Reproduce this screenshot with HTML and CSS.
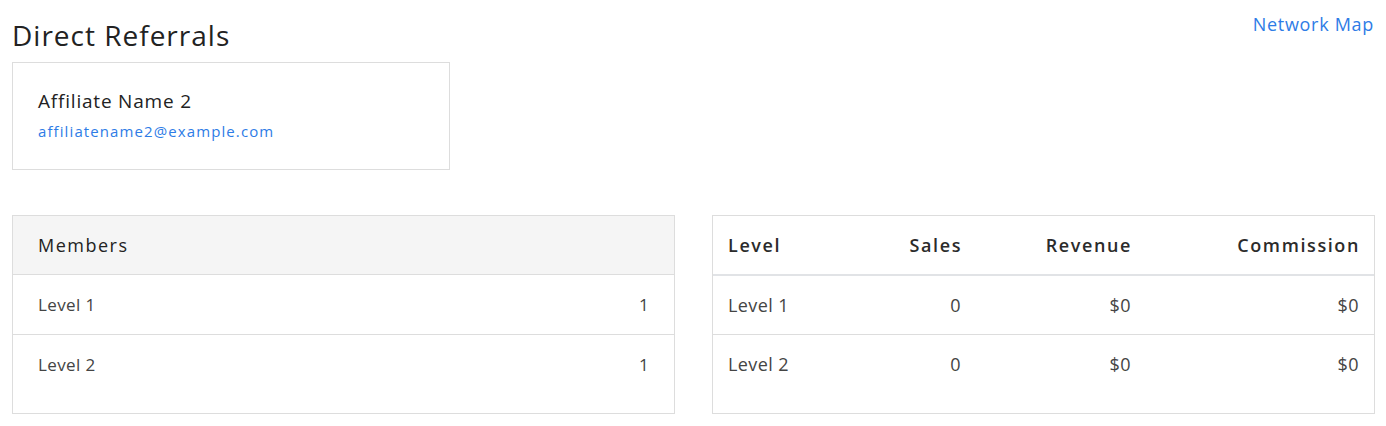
FILE: index.html
```html
<!DOCTYPE html>
<html lang="en">
<head>
<meta charset="utf-8">
<title>Direct Referrals</title>
<link rel="stylesheet" href="styles.css">
</head>
<body>
<div class="page">
  <div class="top">
    <h1 class="title">Direct Referrals</h1>
    <a class="map-link" href="#">Network Map</a>
  </div>
  <div class="affiliate-card">
    <div class="aff-name">Affiliate Name 2</div>
    <a class="aff-email" href="#">affiliatename2@example.com</a>
  </div>
  <div class="panels">
    <div class="panel">
      <div class="panel-head">Members</div>
      <div class="panel-row"><span>Level 1</span><span>1</span></div>
      <div class="panel-row"><span>Level 2</span><span>1</span></div>
    </div>
    <div class="panel">
      <table class="stats">
        <thead>
          <tr><th class="c-level">Level</th><th class="c-sales">Sales</th><th class="c-rev">Revenue</th><th class="c-comm">Commission</th></tr>
        </thead>
        <tbody>
          <tr><td>Level 1</td><td>0</td><td>$0</td><td>$0</td></tr>
          <tr><td>Level 2</td><td>0</td><td>$0</td><td>$0</td></tr>
        </tbody>
      </table>
    </div>
  </div>
</div>
</body>
</html>
```
FILE: styles.css
```css
* { box-sizing: border-box; }
body {
  margin: 0;
  background: #fff;
  font-family: "Open Sans", "DejaVu Sans", sans-serif;
  color: #333;
}
.page {
  padding: 0 12px 0 12px;
}
.top {
  display: flex;
  justify-content: space-between;
  align-items: flex-start;
}
.title {
  margin: 16px 0 0 0;
  font-size: 28px;
  font-weight: 400;
  letter-spacing: 1px;
  color: #222;
  line-height: 38px;
  height: 46px;
}
.map-link {
  margin-top: 12px;
  margin-right: 0;
  font-size: 18px;
  letter-spacing: 0.7px;
  line-height: 24px;
  color: #2e7ce6;
  text-decoration: none;
}
.affiliate-card {
  width: 438px;
  height: 108px;
  border: 1px solid #ddd;
  padding: 25px 25px 0 25px;
}
.aff-name {
  font-size: 19px;
  letter-spacing: 0.8px;
  line-height: 26px;
  color: #222;
}
.aff-email {
  display: block;
  margin-top: 8px;
  font-size: 15px;
  letter-spacing: 1.1px;
  line-height: 18px;
  color: #2e7ce6;
  text-decoration: none;
}
.panels {
  display: grid;
  grid-template-columns: 663px 663px;
  column-gap: 37px;
  margin-top: 45px;
}
.panel {
  border: 1px solid #ddd;
  padding-bottom: 20px;
}
.panel-head {
  background: #f5f5f5;
  height: 59px;
  border-bottom: 1px solid #ddd;
  padding: 0 25px;
  display: flex;
  align-items: center;
  font-size: 18px;
  letter-spacing: 1.5px;
  color: #222;
}
.panel-row {
  height: 59px;
  padding: 0 25px 0 25px;
  display: flex;
  justify-content: space-between;
  align-items: center;
  font-size: 17px;
  letter-spacing: 0.4px;
  color: #444;
}
.panel-row + .panel-row { border-top: 1px solid #ddd; }
.stats {
  width: 100%;
  border-collapse: collapse;
  font-size: 18px;
}
.stats th, .stats td {
  padding: 0 15px;
  height: 59px;
  text-align: right;
  vertical-align: middle;
}
.stats th {
  font-weight: 600;
  font-size: 18px;
  letter-spacing: 1.6px;
  color: #2b2b2b;
  border-bottom: 2px solid #e1e3e6;
  padding-right: 14px;
}
.stats td {
  color: #444;
  letter-spacing: 0.4px;
}
.stats tbody tr + tr td { border-top: 1px solid #ddd; }
.stats th:first-child, .stats td:first-child { text-align: left; }
.c-sales { width: 170px; }
.c-rev { width: 170px; }
.c-comm { width: 228px; }
```
